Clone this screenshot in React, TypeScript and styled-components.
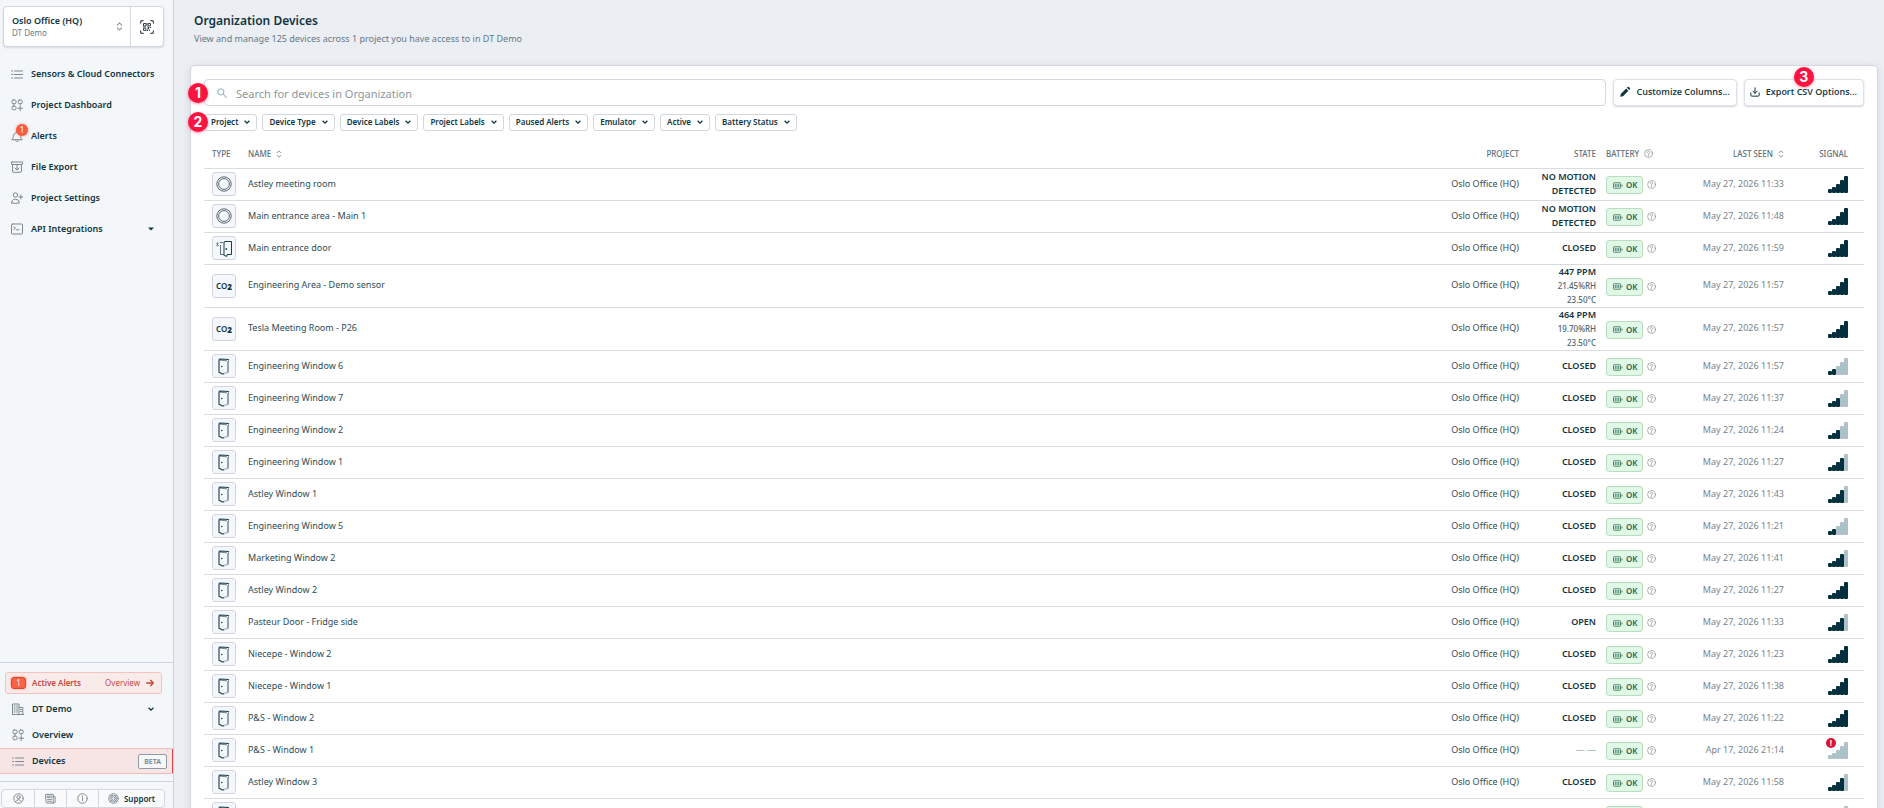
import React from 'react';
import styled, { createGlobalStyle, css } from 'styled-components';

const ink = '#12343f';
const line = '#d3d6df';
const muted = '#6b7c86';

const GlobalStyle = createGlobalStyle`
  *, *::before, *::after { box-sizing: border-box; }
  body {
    margin: 0;
    background: #ebeef3;
    color: ${ink};
    font-family: 'Noto Sans', 'Open Sans', sans-serif;
    font-size: 9px;
    line-height: 14px;
  }
  button, input { font: inherit; color: inherit; margin: 0; }
  button { cursor: pointer; padding: 0; background: none; border: 0; }
  a { color: inherit; text-decoration: none; }
  h1, p { margin: 0; }
  svg { display: block; flex: none; }
`;

const Shell = styled.div`
  display: flex;
  height: 100vh;
  overflow: hidden;
`;

const Sidebar = styled.aside`
  display: flex;
  flex-direction: column;
  flex: none;
  width: 174px;
  background: #f3f7fa;
  border-right: 1px solid #cdd3e0;
`;

const Switcher = styled.div`
  display: flex;
  height: 41px;
  margin: 6px 9px 11px 3px;
  background: #fff;
  border: 1px solid ${line};
  border-radius: 4px;
  box-shadow: 0 1px 2px rgba(30, 50, 80, 0.14);
`;

const ProjectButton = styled.button`
  display: flex;
  flex: 1;
  align-items: center;
  justify-content: space-between;
  padding: 0 7px 0 8px;
  text-align: left;
  border-right: 1px solid ${line};
`;

const ProjectName = styled.span`
  display: block;
  font-weight: 600;
  line-height: 13px;
`;

const OrgName = styled.span`
  display: block;
  font-size: 8px;
  line-height: 12px;
  color: ${muted};
`;

const ScanButton = styled.button`
  display: flex;
  align-items: center;
  justify-content: center;
  width: 32px;
`;

const Nav = styled.nav`
  display: flex;
  flex-direction: column;
`;

const NavLink = styled.a<{ $compact?: boolean; $active?: boolean }>`
  display: grid;
  grid-template-columns: 12px 1fr auto;
  align-items: center;
  column-gap: 8px;
  height: ${(p) => (p.$compact ? 26 : 31)}px;
  padding: 0 19px 0 ${(p) => (p.$compact ? 12 : 11)}px;
  font-weight: 600;
  white-space: nowrap;
  ${(p) =>
    p.$active &&
    css`
      padding-right: 6px;
      background: #f7e5e5;
      border: solid #f2bab8;
      border-width: 1px 0;
      box-shadow: inset -1px 0 #e0474c;
    `}
`;

const NavIcon = styled.span`
  position: relative;
  display: block;
  width: 12px;
  height: 12px;
  color: #7c878e;
`;

const AlertDot = styled.span`
  position: absolute;
  top: -6px;
  left: 5px;
  width: 12px;
  height: 12px;
  border-radius: 50%;
  background: #f65c40;
  color: #fff;
  font-size: 8px;
  font-weight: 400;
  line-height: 12px;
  text-align: center;
  box-shadow: 0 0 3px rgba(246, 92, 64, 0.6);
`;

const BetaTag = styled.span`
  width: 29px;
  height: 15px;
  border: 1px solid #8f9ba6;
  border-radius: 2px;
  background: #f7f6f8;
  color: #74838f;
  font-size: 7px;
  line-height: 13px;
  text-align: center;
`;

const SidebarBottom = styled.div`
  margin-top: auto;
  border-top: 1px solid #cdd3e0;
  padding-top: 9px;
`;

const ActiveAlerts = styled.a`
  display: flex;
  align-items: center;
  height: 22px;
  margin: 0 11px 2px 5px;
  padding: 0 7px 0 5px;
  border: 1px solid #f5c3bf;
  border-radius: 3px;
  background: #faebeb;
  color: #c8473b;
  font-size: 8px;
`;

const AlertCount = styled.span`
  width: 15px;
  height: 12px;
  margin-right: 6px;
  border: 1px solid #d9452c;
  border-radius: 3px;
  background: #fb6244;
  color: #fff;
  line-height: 10px;
  text-align: center;
  box-shadow: 0 0 3px rgba(251, 98, 68, 0.6);
`;

const AlertLabel = styled.span`
  flex: 1;
  font-weight: 600;
`;

const AlertLink = styled.span`
  display: flex;
  align-items: center;
  gap: 6px;
`;

const FooterBar = styled.div`
  margin-top: 7px;
  padding: 7px 8px 0 1px;
  border-top: 1px solid #cdd3e0;
`;

const FooterButtons = styled.div`
  display: flex;
  height: 19px;
  border: 1px solid ${line};
  border-radius: 4px;
  background: #f8fafc;
`;

const FooterButton = styled.button<{ $grow?: boolean }>`
  display: flex;
  align-items: center;
  justify-content: center;
  gap: 5px;
  flex: ${(p) => (p.$grow ? '1' : '0 0 32px')};
  color: #7c878e;
  font-size: 8px;
  font-weight: 600;
  & + & { border-left: 1px solid ${line}; }
`;

const SupportText = styled.span`
  color: ${ink};
`;

const Main = styled.main`
  flex: 1;
  min-width: 0;
  overflow-y: auto;
  scrollbar-width: none;
`;

const PageHeader = styled.header`
  height: 65px;
  padding: 12px 20px 0;
`;

const Title = styled.h1`
  font-size: 12px;
  font-weight: 600;
  line-height: 17px;
`;

const Subtitle = styled.p`
  margin-top: 3px;
  color: #667985;
`;

const Card = styled.section`
  margin: 0 6px 0 16px;
  padding: 13px;
  background: #fff;
  border: 1px solid ${line};
  border-radius: 5px;
  box-shadow: 0 2px 8px rgba(40, 50, 100, 0.1);
`;

const Toolbar = styled.div`
  position: relative;
  display: flex;
  gap: 7px;
  height: 27px;
`;

const SearchField = styled.label`
  display: flex;
  flex: 1;
  align-items: center;
  gap: 9px;
  padding: 0 12px;
  border: 1px solid ${line};
  border-radius: 4px;
  color: #a9c3cb;
`;

const SearchInput = styled.input`
  flex: 1;
  padding: 2px 0 0;
  border: 0;
  outline: 0;
  background: none;
  font-size: 11px;
  color: ${ink};
  &::placeholder { color: #8a979d; opacity: 1; }
`;

const ToolButton = styled.button`
  position: relative;
  display: flex;
  align-items: center;
  gap: 6px;
  padding: 0 6px 2px 5px;
  border: 1px solid #dfe1e8;
  border-radius: 4px;
  background: #fff;
  font-family: 'Open Sans', 'Noto Sans', sans-serif;
  font-weight: 600;
  box-shadow: 0 1px 2px rgba(30, 50, 80, 0.2);
`;

const Filters = styled.div`
  position: relative;
  display: flex;
  gap: 5px;
  margin-top: 8px;
`;

const FilterButton = styled.button`
  display: flex;
  align-items: center;
  gap: 6px;
  height: 17px;
  padding: 0 6px 1px;
  border: 1px solid ${line};
  border-radius: 3px;
  font-size: 8px;
  font-weight: 600;
`;

const Marker = styled.span<{ $left: string; $top: number }>`
  position: absolute;
  left: ${(p) => p.$left};
  top: ${(p) => p.$top}px;
  z-index: 1;
  width: 20px;
  height: 20px;
  border-radius: 50%;
  background: #fc1440;
  color: #fff;
  font-family: Inter, sans-serif;
  font-size: 14px;
  font-weight: 700;
  line-height: 20px;
  text-align: center;
  box-shadow: 0 1px 3px rgba(252, 20, 64, 0.45);
`;

const Table = styled.table`
  width: 100%;
  margin-top: 8px;
  table-layout: fixed;
  border-collapse: separate;
  border-spacing: 0;
`;

const Col = styled.col<{ $width?: number }>`
  width: ${(p) => (p.$width ? `${p.$width}px` : 'auto')};
`;

type CellKind = { $align?: 'right'; $left?: number; $right?: number; $bottom?: number };
const cell = css<CellKind>`
  padding: 0 ${(p) => p.$right ?? 0}px ${(p) => p.$bottom ?? 0}px ${(p) => p.$left ?? 0}px;
  text-align: ${(p) => p.$align ?? 'left'};
  border-bottom: 1px solid #d9dcdf;
  vertical-align: middle;
`;

const Th = styled.th<CellKind>`
  ${cell}
  height: 30px;
  font-size: 8px;
  font-weight: 500;
  color: #5d707c;
`;

const Td = styled.td<CellKind>`
  ${cell}
  height: 32px;
`;

const HeadLabel = styled.span<{ $end?: boolean }>`
  display: flex;
  align-items: center;
  gap: 5px;
  justify-content: ${(p) => (p.$end ? 'flex-end' : 'flex-start')};
`;

const IconButton = styled.button`
  color: #8b979e;
`;

const TypeBox = styled.span`
  display: flex;
  align-items: center;
  justify-content: center;
  width: 24px;
  height: 24px;
  border: 1px solid #cfd4e0;
  border-radius: 3px;
  background: #f4f8fc;
  font-size: 8px;
  font-weight: 600;
`;

const Sub = styled.b`
  margin-top: 3px;
`;

const DeviceLink = styled.a`
  color: #2c4c57;
`;

const ProjectCell = styled(Td)`
  color: #334f5a;
`;

const SeenCell = styled(Td)`
  color: #77848a;
`;

const StateMain = styled.span`
  display: block;
  font-weight: 600;
`;

const StateDetail = styled.span`
  display: block;
  color: #4a6570;
  font-size: 8px;
  font-weight: 500;
`;

const StateNone = styled.span`
  color: #7490a0;
`;

const Battery = styled.div`
  display: flex;
  align-items: center;
  gap: 4px;
`;

const BatteryBadge = styled.span`
  display: flex;
  align-items: center;
  gap: 3px;
  width: 37px;
  height: 18px;
  margin-top: 1px;
  padding-left: 6px;
  border: 1px solid #b9dcc2;
  border-radius: 3px;
  background: #dff9e4;
  color: #2f5f55;
  font-size: 8px;
  font-weight: 600;
`;

const Signal = styled.span`
  position: relative;
  display: inline-block;
  vertical-align: middle;
`;

const SignalAlert = styled.span`
  position: absolute;
  top: -4px;
  left: -2px;
  width: 10px;
  height: 10px;
  border-radius: 50%;
  background: #e0102f;
  color: #fff;
  font-size: 8px;
  font-weight: 700;
  line-height: 10px;
  text-align: center;
`;

const glyphs = {
  list: <path d="M3.500 3h8M3.500 6.500h8M3.500 10h8M.5 3h1M.5 6.500h1M.5 10h1" />,
  dashboard: (
    <>
      <rect x="1" y="1" width="4" height="3.600" rx="1.200" />
      <rect x="7.200" y="1" width="4" height="3.600" rx="1.200" />
      <rect x="1" y="7.200" width="4" height="3.600" rx="1.200" />
      <path d="M9.200 6.700v4.800M6.800 9.200h4.800M3 4.600v2M9.200 4.600v1" />
    </>
  ),
  bell: <path d="M1 9.500c1.500-1 1.200-3 1.800-4.600C3.300 3.200 4.600 2.500 6 2.500s2.700.7 3.200 2.400c.6 1.600.3 3.600 1.800 4.600zM4.500 10c.2 1 .8 1.500 1.500 1.500S7.300 11 7.500 10" />,
  archive: (
    <>
      <rect x=".5" y="1" width="11" height="2.500" rx=".5" />
      <path d="M1.500 3.500v6.500q0 1.300 1.300 1.300h6.400q1.300 0 1.300-1.300V3.500M6 4.500v4.300M4 7l2 2 2-2" />
    </>
  ),
  user: (
    <>
      <circle cx="4.500" cy="3" r="2.200" />
      <path d="M.6 11q0-3.800 3.900-3.800T8.400 11q-3.900.8-7.800 0M9.800 3v4M7.800 5h4" />
    </>
  ),
  terminal: (
    <>
      <rect x=".5" y="1" width="11" height="10" rx="1" />
      <path d="M2.700 3.800l1.800 1.400-1.800 1.400M5.500 6.800h2.500" />
    </>
  ),
  building: (
    <>
      <path d="M.5 11.500V1h6.500v10.500M7 4.500h3.800v7M0 11.500h12" />
      <path d="M2.200 3h1M4.500 3h1M2.200 5h1M4.500 5h1M2.200 7h1M4.500 7h1M2.200 9h1M4.500 9h1M8.500 6.500h1M8.500 8.500h1" />
    </>
  ),
  profile: (
    <>
      <circle cx="6" cy="6" r="5.200" />
      <circle cx="6" cy="4.600" r="1.800" />
      <path d="M2.600 9.600Q4 7.300 6 7.300t3.400 2.300" />
    </>
  ),
  news: (
    <>
      <path d="M1 1.500h8v9.500H2.300Q1 11 1 9.800zM9 4h2v5.700q0 1.300-1.200 1.300H9" />
      <path d="M2.800 7h4.400M2.800 9h4.400M3 3.300h2v1.700H3zM6.300 3.300h1M6.300 5h1" />
    </>
  ),
  info: (
    <>
      <circle cx="6" cy="6" r="5.200" />
      <path d="M6 5.300v3.200M6 3.300v.9" />
    </>
  ),
  lifebuoy: (
    <>
      <circle cx="6" cy="6" r="5.200" />
      <circle cx="6" cy="6" r="2" />
      <circle cx="6" cy="6" r="3.600" strokeDasharray="2 1.400" />
      <path d="M2.300 2.300l2.300 2.300M9.700 2.300L7.400 4.600M2.300 9.700l2.300-2.300M9.700 9.700L7.400 7.400" />
    </>
  ),
  help: (
    <>
      <circle cx="6" cy="6" r="5.200" />
      <path d="M4.300 4.700q.1-1.600 1.700-1.600t1.700 1.400q0 .9-1.700 1.700v1M6 8.300v.9" />
    </>
  ),
  arrow: <path d="M1 6h10M7 2l4 4-4 4" />,
  search: (
    <>
      <circle cx="4.600" cy="4.600" r="3.500" />
      <path d="M7.200 7.200l4.200 4.200" />
    </>
  ),
  download: <path d="M6 1v6.500M3.500 5L6 7.500 8.500 5M1 7v2.700q0 1.300 1.300 1.300h7.400Q11 11 11 9.700V7" />,
};

const Icon = ({ name, size = 12, weight = 1 }: { name: keyof typeof glyphs; size?: number; weight?: number }) => (
  <svg width={size} height={size} viewBox="0 0 12 12" fill="none" stroke="currentColor" strokeWidth={weight} strokeLinecap="round" strokeLinejoin="round" aria-hidden="true">
    {glyphs[name]}
  </svg>
);

const Chevron = () => (
  <svg width="6" height="6" viewBox="0 0 6 6" fill="none" stroke={ink} strokeWidth="1.300" aria-hidden="true">
    <path d="M.6 1.800L3 4.200l2.400-2.400" />
  </svg>
);

const Caret = () => (
  <svg width="6" height="4" viewBox="0 0 6 4" fill={ink} aria-hidden="true">
    <path d="M0 .5h6L3 3.500z" />
  </svg>
);

const Sorter = ({ size = 8 }: { size?: number }) => (
  <svg width={size === 8 ? 6 : 7} height={size} viewBox="0 0 6 8" fill="none" stroke="#7f8c94" strokeWidth=".9" aria-hidden="true">
    <path d="M.8 3L3 .8 5.200 3M.8 5L3 7.200 5.200 5" />
  </svg>
);

const ScanIcon = () => (
  <svg width="14" height="14" viewBox="0 0 14 14" fill="none" stroke="#3c4549" aria-hidden="true">
    <path d="M.6 3.600V2Q.6.6 2 .6h1.600M10.400.6H12q1.400 0 1.400 1.400v1.600M13.400 10.400V12q0 1.400-1.400 1.400h-1.600M3.600 13.400H2Q.6 13.400.6 12v-1.600" strokeWidth="1.200" />
    <path d="M3.500 3.500h2.500v2.500H3.500zM8.200 3.500h2.300v2.300H8.200zM3.500 8.200h2.300v2.300H3.500zM7 3v2.500M7 7h1.500v2H7M9.500 7.500h1.500M9.500 9.500v1.500M6.500 10.500h1.500M3 7h2.500" />
  </svg>
);

const PencilIcon = () => (
  <svg width="12" height="12" viewBox="0 0 12 12" fill={ink} aria-hidden="true">
    <path d="M1.200 10.800l.6-2.800 5.400-5.400 2.200 2.200L4 10.200zM8 1.800l.7-.7q.6-.5 1.200 0l1 1q.5.600 0 1.200l-.7.700z" />
  </svg>
);

const BatteryIcon = () => (
  <svg width="10" height="7" viewBox="0 0 10 7" fill="none" stroke="#4c8272" aria-hidden="true">
    <rect x=".5" y=".8" width="7" height="5.400" rx=".6" />
    <path d="M2.300 2v3M4 2v3M5.700 2v3M9 2.500v2" />
  </svg>
);

const MotionIcon = () => (
  <svg width="16" height="16" viewBox="0 0 16 16" fill="none" stroke="#5f696f" aria-hidden="true">
    <circle cx="8" cy="8" r="7.200" strokeWidth="1" />
    <circle cx="8" cy="8" r="5.400" strokeWidth="1" />
  </svg>
);

const DoorIcon = () => (
  <svg width="12" height="17" viewBox="0 0 12 17" fill="none" stroke="#183c47" strokeLinejoin="round" aria-hidden="true">
    <path d="M10.500 1.500v13L5 15.500M9.500 3v11" stroke="#7d8b92" strokeWidth=".8" />
    <path d="M10.800 1.500L2 1q-1 0-1 1v12.300L4.500 16l1.500-.3" strokeWidth="1.100" />
    <path d="M1.500 2.200L9 2.800" strokeWidth=".6" />
    <circle cx="3.800" cy="8.500" r=".8" fill="#183c47" stroke="none" />
  </svg>
);

const DoorMotionIcon = () => (
  <svg width="18" height="17" viewBox="0 0 18 17" fill="none" stroke="#183c47" strokeLinejoin="round" aria-hidden="true">
    <path d="M9 2v13.500l3 .8v-1.500M9 2l1-.5h6.500v13H12" />
    <path d="M5 2.500h3M5.500 5v9.500H9" strokeWidth=".7" />
    <path d="M11.300 8v2" strokeWidth="1.300" />
    <path d="M1 3l3 3M4 2.500L1 6M2.500 2v4.500" strokeWidth=".7" stroke="#6d8088" />
  </svg>
);

const barHeights = [4, 6, 9, 13, 17];
const barColor = (lit: boolean) => (lit ? '#04303d' : '#adc1c8');

const SignalBars = ({ level }: { level: number }) => (
  <Signal role="img" aria-label={`Signal ${level} of 5`}>
    <svg width="20" height="17" viewBox="0 0 20 17" aria-hidden="true">
      {barHeights.map((h, i) => (
        <g key={h} fill={barColor(i < level)}>
          <rect x={i * 4} y={17 - h} width="4" height={h} rx="1" />
          <rect x={i * 4} y={18 - (barHeights[i - 1] ?? 3)} width="1" height={(barHeights[i - 1] ?? 3) - 2} />
          <rect x={i * 4 + 3} y={18 - h} width="1" height={h - 2} />
        </g>
      ))}
    </svg>
    {level === 0 && <SignalAlert>!</SignalAlert>}
  </Signal>
);

type Kind = 'motion' | 'doorMotion' | 'co2' | 'door';
type Device = { kind: Kind; name: string; state: string; details?: string[]; seen: string; signal: number };

const device = (kind: Kind, name: string, state: string, seen: string, signal: number, details?: string[]): Device => ({
  kind, name, state, seen, signal, details,
});

const devices: Device[] = [
  device('motion', 'Astley meeting room', 'NO MOTION DETECTED', 'May 27, 2026 11:33', 5),
  device('motion', 'Main entrance area - Main 1', 'NO MOTION DETECTED', 'May 27, 2026 11:48', 5),
  device('doorMotion', 'Main entrance door', 'CLOSED', 'May 27, 2026 11:59', 5),
  device('co2', 'Engineering Area - Demo sensor', '447 PPM', 'May 27, 2026 11:57', 5, ['21.45%RH', '23.50°C']),
  device('co2', 'Tesla Meeting Room - P26', '464 PPM', 'May 27, 2026 11:57', 5, ['19.70%RH', '23.50°C']),
  device('door', 'Engineering Window 6', 'CLOSED', 'May 27, 2026 11:57', 2),
  device('door', 'Engineering Window 7', 'CLOSED', 'May 27, 2026 11:37', 3),
  device('door', 'Engineering Window 2', 'CLOSED', 'May 27, 2026 11:24', 3),
  device('door', 'Engineering Window 1', 'CLOSED', 'May 27, 2026 11:27', 4),
  device('door', 'Astley Window 1', 'CLOSED', 'May 27, 2026 11:43', 4),
  device('door', 'Engineering Window 5', 'CLOSED', 'May 27, 2026 11:21', 2),
  device('door', 'Marketing Window 2', 'CLOSED', 'May 27, 2026 11:41', 4),
  device('door', 'Astley Window 2', 'CLOSED', 'May 27, 2026 11:27', 5),
  device('door', 'Pasteur Door - Fridge side', 'OPEN', 'May 27, 2026 11:33', 4),
  device('door', 'Niecepe - Window 2', 'CLOSED', 'May 27, 2026 11:23', 5),
  device('door', 'Niecepe - Window 1', 'CLOSED', 'May 27, 2026 11:38', 5),
  device('door', 'P&S - Window 2', 'CLOSED', 'May 27, 2026 11:22', 5),
  device('door', 'P&S - Window 1', '', 'Apr 17, 2026 21:14', 0),
  device('door', 'Astley Window 3', 'CLOSED', 'May 27, 2026 11:58', 4),
  device('door', 'Astley Window 4', 'CLOSED', 'May 27, 2026 11:58', 4),
];

const typeIcons: Record<Kind, React.ReactNode> = {
  motion: <MotionIcon />,
  doorMotion: <DoorMotionIcon />,
  co2: <>CO<Sub>2</Sub></>,
  door: <DoorIcon />,
};

const DeviceRow = ({ item }: { item: Device }) => (
  <tr>
    <Td $left={8} $bottom={1}><TypeBox>{typeIcons[item.kind]}</TypeBox></Td>
    <Td $bottom={2}><DeviceLink href="#device">{item.name}</DeviceLink></Td>
    <ProjectCell $align="right" $bottom={2}>Oslo Office (HQ)</ProjectCell>
    <Td $align="right" $bottom={item.details ? 0 : 2}>
      {item.state ? <StateMain>{item.state}</StateMain> : <StateNone>— —</StateNone>}
      {item.details?.map((d) => <StateDetail key={d}>{d}</StateDetail>)}
    </Td>
    <Td $left={10}>
      <Battery>
        <BatteryBadge><BatteryIcon />OK</BatteryBadge>
        <IconButton aria-label="About battery status"><Icon name="help" size={9} /></IconButton>
      </Battery>
    </Td>
    <SeenCell $align="right" $bottom={2}>{item.seen}</SeenCell>
    <Td $align="right" $right={16}><SignalBars level={item.signal} /></Td>
  </tr>
);

const projectLinks: { icon: keyof typeof glyphs; label: string; alerts?: number; expands?: boolean }[] = [
  { icon: 'list', label: 'Sensors & Cloud Connectors' },
  { icon: 'dashboard', label: 'Project Dashboard' },
  { icon: 'bell', label: 'Alerts', alerts: 1 },
  { icon: 'archive', label: 'File Export' },
  { icon: 'user', label: 'Project Settings' },
  { icon: 'terminal', label: 'API Integrations', expands: true },
];

const filters = ['Project', 'Device Type', 'Device Labels', 'Project Labels', 'Paused Alerts', 'Emulator', 'Active', 'Battery Status'];

export default function App() {
  return (
    <Shell>
      <GlobalStyle />
      <Sidebar>
        <Switcher>
          <ProjectButton>
            <span>
              <ProjectName>Oslo Office (HQ)</ProjectName>
              <OrgName>DT Demo</OrgName>
            </span>
            <Sorter size={9} />
          </ProjectButton>
          <ScanButton aria-label="Scan device code"><ScanIcon /></ScanButton>
        </Switcher>
        <Nav aria-label="Project">
          {projectLinks.map((l) => (
            <NavLink key={l.label} href="#project">
              <NavIcon>
                <Icon name={l.icon} />
                {l.alerts && <AlertDot>{l.alerts}</AlertDot>}
              </NavIcon>
              <span>{l.label}</span>
              {l.expands && <Caret />}
            </NavLink>
          ))}
        </Nav>
        <SidebarBottom>
          <ActiveAlerts href="#alerts">
            <AlertCount>1</AlertCount>
            <AlertLabel>Active Alerts</AlertLabel>
            <AlertLink>Overview <Icon name="arrow" size={8} weight={2} /></AlertLink>
          </ActiveAlerts>
          <Nav aria-label="Organization">
            <NavLink $compact href="#organization"><NavIcon><Icon name="building" /></NavIcon><span>DT Demo</span><Chevron /></NavLink>
            <NavLink $compact href="#overview"><NavIcon><Icon name="dashboard" /></NavIcon><span>Overview</span></NavLink>
            <NavLink $compact $active href="#devices"><NavIcon><Icon name="list" /></NavIcon><span>Devices</span><BetaTag>BETA</BetaTag></NavLink>
          </Nav>
          <FooterBar>
            <FooterButtons>
              <FooterButton aria-label="Profile"><Icon name="profile" size={11} /></FooterButton>
              <FooterButton aria-label="News"><Icon name="news" size={11} /></FooterButton>
              <FooterButton aria-label="Information"><Icon name="info" size={11} /></FooterButton>
              <FooterButton $grow><Icon name="lifebuoy" size={11} /><SupportText>Support</SupportText></FooterButton>
            </FooterButtons>
          </FooterBar>
        </SidebarBottom>
      </Sidebar>

      <Main>
        <PageHeader>
          <Title>Organization Devices</Title>
          <Subtitle>View and manage 125 devices across 1 project you have access to in DT Demo</Subtitle>
        </PageHeader>
        <Card>
          <Toolbar>
            <Marker $left="-16px" $top={4}>1</Marker>
            <SearchField>
              <Icon name="search" size={10} weight={1.5} />
              <SearchInput type="text" aria-label="Search devices" placeholder="Search for devices in Organization" />
            </SearchField>
            <ToolButton><PencilIcon />Customize Columns...</ToolButton>
            <ToolButton>
              <Icon name="download" size={10} weight={1.2} />Export CSV Options...
              <Marker $left="calc(50% - 10px)" $top={-13}>3</Marker>
            </ToolButton>
          </Toolbar>
          <Filters>
            <Marker $left="-16px" $top={-2}>2</Marker>
            {filters.map((f) => <FilterButton key={f}>{f}<Chevron /></FilterButton>)}
          </Filters>
          <Table>
            <colgroup>
              <Col $width={44} /><Col /><Col $width={100} /><Col $width={77} /><Col $width={94} /><Col $width={94} /><Col $width={80} />
            </colgroup>
            <thead>
              <tr>
                <Th $left={8}>TYPE</Th>
                <Th><HeadLabel>NAME <IconButton aria-label="Sort by name"><Sorter /></IconButton></HeadLabel></Th>
                <Th $align="right">PROJECT</Th>
                <Th $align="right">STATE</Th>
                <Th $left={10}><HeadLabel>BATTERY <IconButton aria-label="About battery"><Icon name="help" size={9} /></IconButton></HeadLabel></Th>
                <Th $align="right"><HeadLabel $end>LAST SEEN <IconButton aria-label="Sort by last seen"><Sorter /></IconButton></HeadLabel></Th>
                <Th $align="right" $right={16}>SIGNAL</Th>
              </tr>
            </thead>
            <tbody>
              {devices.map((d) => <DeviceRow key={d.name} item={d} />)}
            </tbody>
          </Table>
        </Card>
      </Main>
    </Shell>
  );
}
